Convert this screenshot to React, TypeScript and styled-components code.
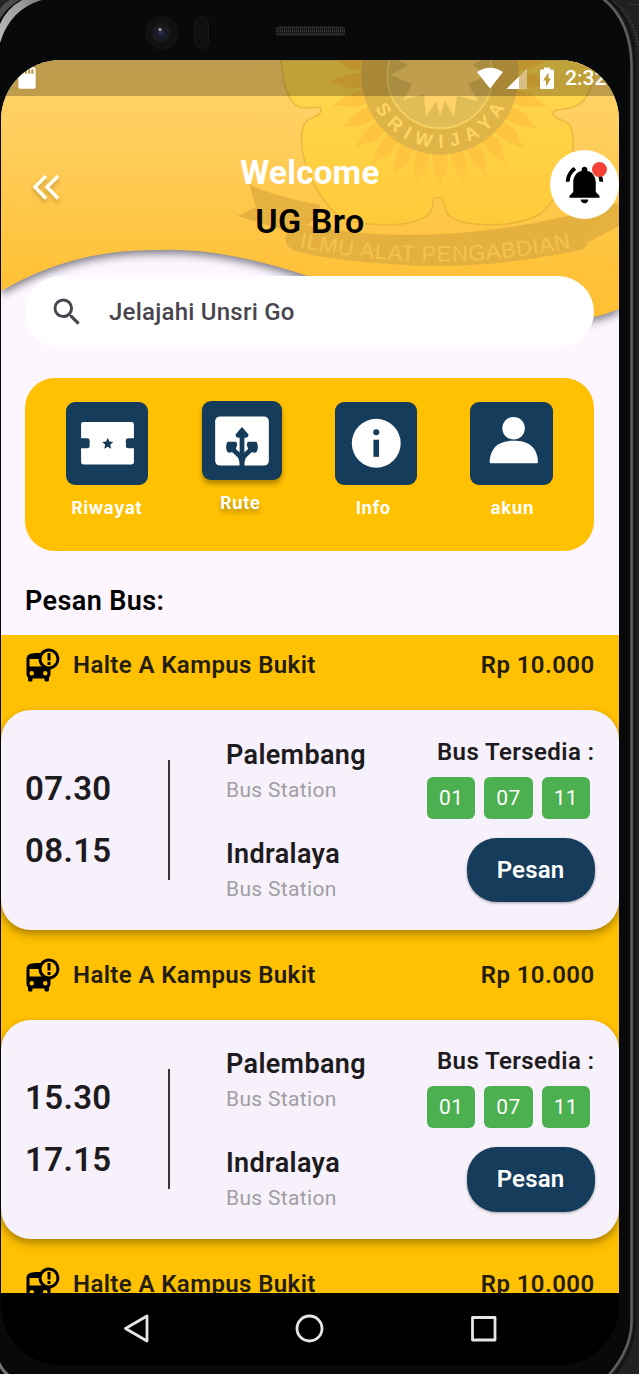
import React from 'react';
import styled, { createGlobalStyle } from 'styled-components';
import { MdBusAlert, MdNotificationsActive, MdSdCard, MdSearch } from 'react-icons/md';

const Global = createGlobalStyle`
  * { box-sizing: border-box; }
  html, body { margin: 0; background: #08090b; overflow: hidden; }
  body { font-family: Roboto, "Liberation Sans", sans-serif; }
`;

const Device = styled.div`
  position: relative;
  width: 639px;
  height: 1374px;
  padding: 60px 20px 9px 1px;
  background: #08090b;
  overflow: hidden;
`;

const Shell = styled.svg`
  position: absolute;
  inset: 0;
`;

const Screen = styled.main`
  position: relative;
  display: flex;
  flex-direction: column;
  width: 618px;
  height: 1305px;
  border-radius: 60px;
  background: linear-gradient(#fdf6ff 1200px, #000 1200px);
  overflow: hidden;
`;

const Art = styled.svg`
  position: absolute;
  left: 0;
  top: 0;
`;

const StatusBar = styled.div`
  position: relative;
  display: flex;
  align-items: center;
  height: 35.5px;
  flex: none;
  padding: 0 10px 0 13px;
  background: rgba(0, 0, 0, 0.25);
  color: #fff;
`;

const StatusIcons = styled.svg`
  margin-left: auto;
`;

const Clock = styled.span`
  width: 44px;
  margin-left: 11px;
  font-size: 21px;
  line-height: 36px;
  font-weight: 500;
  white-space: nowrap;
`;

const Header = styled.header`
  position: relative;
  display: grid;
  grid-template-columns: 69px 1fr 69px;
  align-items: start;
  height: 180.5px;
  flex: none;
`;

const BackButton = styled.button`
  display: flex;
  border: 0;
  padding: 0;
  margin: 74.5px 0 0 26px;
  background: none;
`;

const Greeting = styled.h1`
  margin: 53px 0 0;
  font-size: 33px;
  line-height: 48px;
  font-weight: 700;
  letter-spacing: 0.3px;
  text-align: center;
  color: #fff;
`;

const UserName = styled.div`
  font-size: 34px;
  font-weight: 600;
  color: #000;
  letter-spacing: 0.5px;
`;

const BellButton = styled.button`
  position: relative;
  display: flex;
  align-items: center;
  justify-content: center;
  width: 69px;
  height: 69px;
  margin: 54px 0 0 -0.5px;
  padding: 0;
  border: 0;
  border-radius: 50%;
  background: #fff;
  color: #000;
`;

const Dot = styled.span`
  position: absolute;
  right: 12px;
  top: 12px;
  width: 15px;
  height: 15px;
  border-radius: 50%;
  background: #f44336;
`;

const SearchBar = styled.div`
  position: relative;
  display: flex;
  align-items: center;
  gap: 24px;
  flex: none;
  height: 72px;
  margin: 0 25px 0 24px;
  padding-left: 24px;
  border-radius: 36px;
  background: #fff;
  color: #49454f;
  font-size: 24px;
  letter-spacing: 0.24px;
  font-weight: 500;
`;

const Menu = styled.nav`
  display: grid;
  grid-template-columns: 82px 80px 82px 82px;
  column-gap: 53.5px;
  flex: none;
  height: 172.5px;
  margin: 30px 25px 0 24px;
  padding: 24px 0 0 41px;
  border-radius: 30px;
  background: #ffc102;
`;

const MenuItem = styled.div<{ $raised?: boolean }>`
  display: flex;
  flex-direction: column;
  align-items: center;
  gap: ${p => (p.$raised ? 11 : 11.5)}px;
  margin-top: ${p => (p.$raised ? -1.5 : 0)}px;
  color: #fff;
  font-family: Inter, Roboto, sans-serif;
  font-size: 17px;
  line-height: 24px;
  font-weight: 700;
  text-shadow: ${p => (p.$raised ? '0 4px 4px rgba(0,0,0,.28)' : 'none')};
`;

const Tile = styled.div<{ $raised?: boolean }>`
  width: ${p => (p.$raised ? 80 : 82.5)}px;
  height: ${p => (p.$raised ? 79.5 : 82.5)}px;
  border-radius: 9px;
  background: #153c5b;
  box-shadow: ${p => (p.$raised ? '0 4px 5px rgba(0,0,0,.3)' : 'none')};
  svg { display: block; width: 100%; height: 100%; }
`;

const Caption = styled.span<{ $nudge?: number }>`
  letter-spacing: 0.7px;
  margin-right: ${p => p.$nudge ?? 0}px;
`;

const SectionTitle = styled.h2`
  flex: none;
  height: 84px;
  margin: 0;
  padding: 34px 24px 0;
  font-size: 27px;
  line-height: 33px;
  font-weight: 600;
  letter-spacing: 0.4px;
  color: #000;
`;

const Trips = styled.section`
  flex: 1;
  min-height: 0;
  overflow: hidden;
  background: #ffc102;
`;

const Trip = styled.article`
  height: 309.6px;
  padding-top: 12.5px;
`;

const TripHead = styled.div`
  display: flex;
  align-items: center;
  height: 36px;
  margin: 0 24.5px 27px 24px;
  gap: 12px;
  color: #241d10;
  font-size: 24px;
  font-weight: 600;
  letter-spacing: 0.4px;
  svg { color: #000; }
`;

const Price = styled.span`
  margin-left: auto;
`;

const TripCard = styled.div`
  display: flex;
  align-items: center;
  height: 219.5px;
  padding: 0 24.5px 0 24px;
  border-radius: 30px;
  background: #f6f1fa;
  box-shadow: 0 3px 6px rgba(0, 0, 0, 0.22), 0 6px 12px rgba(0, 0, 0, 0.15);
  color: #1d1b20;
`;

const Times = styled.div`
  display: flex;
  flex-direction: column;
  gap: 22px;
  width: 143px;
  font-size: 33px;
  line-height: 40px;
  font-weight: 600;
  letter-spacing: 0.35px;
`;

const Divider = styled.div`
  width: 1.5px;
  height: 120px;
  background: #37353a;
`;

const Stops = styled.div`
  display: flex;
  flex-direction: column;
  gap: 35px;
  margin-left: 56.5px;
  padding-top: 1px;
`;

const StopName = styled.div`
  font-size: 27px;
  line-height: 32px;
  font-weight: 600;
  letter-spacing: 0.35px;
`;

const StopKind = styled.div`
  margin-top: 7px;
  font-size: 21px;
  line-height: 25px;
  letter-spacing: 0.33px;
  color: #a09ea3;
`;

const Availability = styled.div`
  display: flex;
  flex-direction: column;
  align-items: flex-end;
  margin-left: auto;
  font-size: 24px;
  line-height: 28px;
  font-weight: 600;
  letter-spacing: 0.4px;
`;

const Chips = styled.div`
  display: flex;
  gap: 9px;
  margin: 11px 4.5px 19px 0;
`;

const Chip = styled.span`
  width: 48.3px;
  height: 42px;
  border-radius: 6px;
  background: #4caf50;
  color: #fff;
  font-size: 21px;
  line-height: 42px;
  font-weight: 400;
  text-align: center;
`;

const OrderButton = styled.button`
  width: 128px;
  height: 64.5px;
  padding: 0;
  border: 0;
  border-radius: 30px;
  background: #153c5b;
  box-shadow: 0 1px 3px rgba(0, 0, 0, 0.35);
  color: #fff;
  font: 600 24px Roboto, sans-serif;
  letter-spacing: 0.15px;
`;

const NavBar = styled.footer`
  flex: none;
  height: 72.5px;
  background: #000;
  svg { display: block; }
`;

const DeviceShell = () => (
  <Shell width="639" height="1374" viewBox="0 0 639 1374" fill="none">
    <defs>
      <radialGradient id="lens">
        <stop offset="0" stopColor="#30344e" />
        <stop offset=".45" stopColor="#141624" />
        <stop offset=".65" stopColor="#1d1d1f" />
        <stop offset="1" stopColor="#101012" />
      </radialGradient>
      <linearGradient id="silver" x1="0" y1="1" x2="1" y2="0">
        <stop offset="0" stopColor="#bdbdbd" />
        <stop offset=".7" stopColor="#9b9b9b" />
        <stop offset="1" stopColor="#777" />
      </linearGradient>
      <pattern id="mesh" width="2" height="3" patternUnits="userSpaceOnUse">
        <rect width="2" height="3" fill="#191919" />
        <rect width="1" height="2" fill="#383838" />
      </pattern>
    </defs>
    <path d="M0 0H20Q7 7 0 19Z" fill="#4b4c4e" />
    <path d="M0 0H10Q4 3 0 9Z" fill="#232426" />
    <path d="M22 0H42Q10 9 0 43V24Q7 8 22 0Z" fill="url(#silver)" />
    <path d="M604 0Q632 22 632 70V1322Q632 1352 610 1374H639V0Z" fill="#202123" />
    <path d="M602 -2Q631 20 631.500 66V1322Q631 1350 608 1376" stroke="#5f6161" strokeWidth="2.500" />
    <path d="M608 -1Q635 20 635 66V1322Q634 1352 614 1375" stroke="#111213" strokeWidth="2" />
    <path d="M613 1Q635 18 638 46" stroke="#777" strokeWidth="1" strokeDasharray="1 2" />
    <path d="M628 4.500H639" stroke="#333" />
    <path d="M-1 1363Q2 1370 8 1375" stroke="#777" strokeWidth="3" />
    <circle cx="162" cy="33" r="17" fill="#111113" />
    <circle cx="161" cy="33" r="11" fill="url(#lens)" />
    <circle cx="160" cy="29.500" r="1.600" fill="#aaa" />
    <rect x="194.500" y="16.500" width="14" height="32" rx="7" fill="#0d0e0f" stroke="#17181a" />
    <circle cx="201" cy="24" r="5" stroke="#151517" />
    <circle cx="201" cy="41" r="5" stroke="#151517" />
    <rect x="276" y="26" width="69" height="10" rx="4" fill="url(#mesh)" />
  </Shell>
);

const petals = Array.from({ length: 29 }, (_, i) => -14 + i);

const HeaderArt = () => (
  <Art width="618" height="290" viewBox="1 60 618 290">
    <defs>
      <linearGradient id="sun" x1="0" y1="60" x2="0" y2="320" gradientUnits="userSpaceOnUse">
        <stop offset="0" stopColor="#ffd268" />
        <stop offset=".25" stopColor="#ffcf60" />
        <stop offset=".8" stopColor="#ffc23a" />
        <stop offset="1" stopColor="#ffbf32" />
      </linearGradient>
      <linearGradient id="flower" x1="0" y1="60" x2="0" y2="225" gradientUnits="userSpaceOnUse">
        <stop offset="0" stopColor="#ffd84f" />
        <stop offset="1" stopColor="#ffca3a" />
      </linearGradient>
      <filter id="soft" x="-5%" y="-5%" width="110%" height="120%">
        <feGaussianBlur stdDeviation="4" />
      </filter>
      <path id="ringText" d="M375.300 107.300A72 72 0 0 0 506 104" />
      <path id="bannerText" d="M299 247Q435 276 575 247" />
      <clipPath id="sky">
        <path d="M1 60H619V309Q595 319 560 323Q440 330 330 284Q230 247 160 250Q75 248 1 291Z" />
      </clipPath>
    </defs>
    <path d="M1 60H619V309Q595 319 560 323Q440 330 330 284Q230 247 160 250Q75 248 1 291Z" fill="#55555f" opacity=".75" filter="url(#soft)" transform="translate(0 4)" />
    <g clipPath="url(#sky)">
      <rect x="1" y="60" width="618" height="290" fill="url(#sun)" />
      <path
        d="M281 60C283 88 290 108 305 108C316 108 322 105 321 111C319 119 307 115 303 127C296 155 315 195 338 216C360 226 398 228 418 220C434 216 432 206 434 198H442C446 206 444 216 456 220C478 228 520 226 540 214C562 196 578 160 572 130C569 118 555 122 553 114C553 107 565 112 578 105C590 98 594 80 598 60Z"
        fill="url(#flower)" stroke="#dfac35" strokeOpacity=".65" strokeWidth="1.500"
      />
      <g fill="#ffc440">
        {petals.map(i => (
          <path key={i} d="M-7 76Q-9 90 0 112Q1 102 6 96Q9 86 6 76Z" transform={`translate(440 76) rotate(${i * 12.4})`} />
        ))}
      </g>
      <circle cx="440" cy="75.700" r="78.700" fill="#e0b548" />
      <circle cx="440" cy="75.700" r="52.500" fill="#e1bd57" stroke="#f5cf60" strokeWidth="2" />
      <path
        d="M398 60L408 65L391 75L412 84L403 100L424 94L426 117L436 101L440 116L445 101L454 117L457 96L478 101L468 84L488 75L472 65L481 60Z"
        fill="#ffd368"
      />
      <text fill="#ffd666" fontFamily="Liberation Sans" fontWeight="700" fontSize="18.500">
        <textPath href="#ringText" textLength="160">SRIWIJAYA</textPath>
      </text>
      <path d="M249 184Q270 195 320 205Q322 222 290 232L237 216L256 207Z" fill="#e6b23f" />
      <path d="M619 204Q590 220 570 223L585 244L619 226Z" fill="#e6b23f" />
      <path d="M300 224Q440 254 619 203V212L586 234Q592 249 575 251Q500 267 425 266Q330 262 292 250Q280 240 290 229Z" fill="#e4b13e" />
      <text fill="#f4c34d" fontFamily="Liberation Sans" fontSize="22">
        <textPath href="#bannerText" textLength="274">ILMU ALAT PENGABDIAN</textPath>
      </text>
    </g>
  </Art>
);

const TicketIcon = () => (
  <svg viewBox="0 0 82 82">
    <path d="M17 20H65Q67.500 20 67.500 22V36H62Q59.500 36 59.500 38V44Q59.500 46 62 46H67.500V60Q67.500 62 65.500 62H17Q15 62 15 60V46H21Q23.500 46 23.500 44V38Q23.500 36 21 36H15V22Q15 20 17 20Z" fill="#fff" />
    <path d="M41.500 35.500L43.100 39.300L47 39.700L44 42.400L44.900 46.500L41.500 44.400L38 46.500L38.900 42.400L36 39.700L39.900 39.300Z" fill="#153c5b" />
  </svg>
);

const RouteIcon = () => (
  <svg viewBox="0 0 80 80">
    <rect x="13" y="15.500" width="54" height="49.500" rx="5" fill="#fff" />
    <g fill="#153c5b" stroke="#153c5b" strokeLinejoin="round" strokeWidth="2">
      <path d="M40 27.500L45.500 34Q45.500 36 43 36H37Q34.500 36 34.500 34Z" />
      <path d="M26 42H33Q35 43 33.500 46L32.500 49Q28 52 26 50.500Q24 46 26 42Z" />
      <path d="M54 42H47Q45 43 46.500 46L47.500 49Q52 52 54 50.500Q56 46 54 42Z" />
    </g>
    <path d="M40 35V66M29 47L37.500 55Q40 58 40 66M51 47L42.500 55Q40 58 40 66" fill="none" stroke="#153c5b" strokeWidth="4.800" />
  </svg>
);

const InfoIcon = () => (
  <svg viewBox="0 0 82 82">
    <circle cx="41" cy="41" r="24.300" fill="#fff" />
    <circle cx="41" cy="30" r="3" fill="#153c5b" />
    <rect x="38.200" y="37.500" width="5.600" height="17" fill="#153c5b" />
  </svg>
);

const PersonIcon = () => (
  <svg viewBox="0 0 82 82">
    <circle cx="43.300" cy="26" r="11.200" fill="#fff" />
    <path d="M20.500 61Q19.500 61 19.500 59.500C20 44 30 38.500 43.500 38.500S67 44 67.500 59.500Q67.500 61 66.500 61Z" fill="#fff" />
  </svg>
);

const trips = [
  { from: '07.30', to: '08.15' },
  { from: '15.30', to: '17.15' },
  { from: '17.30', to: '18.15' },
];

const TripItem = ({ from, to }: { from: string; to: string }) => (
  <Trip>
    <TripHead>
      <MdBusAlert size={36} />
      <span>Halte A Kampus Bukit</span>
      <Price>Rp 10.000</Price>
    </TripHead>
    <TripCard>
      <Times><span>{from}</span><span>{to}</span></Times>
      <Divider />
      <Stops>
        {['Palembang', 'Indralaya'].map(name => (
          <div key={name}>
            <StopName>{name}</StopName>
            <StopKind>Bus Station</StopKind>
          </div>
        ))}
      </Stops>
      <Availability>
        <span>Bus Tersedia :</span>
        <Chips>{['01', '07', '11'].map(n => <Chip key={n}>{n}</Chip>)}</Chips>
        <OrderButton>Pesan</OrderButton>
      </Availability>
    </TripCard>
  </Trip>
);

const BackIcon = styled.svg`
  filter: drop-shadow(0 3px 2px rgba(0, 0, 0, 0.22));
`;

export default function App() {
  return (
    <>
      <Global />
      <Device>
        <DeviceShell />
        <Screen>
          <HeaderArt />
          <StatusBar>
            <MdSdCard size={26} />
            <StatusIcons width="78" height="24" viewBox="476 65 78 24" fill="#fff">
              <path d="M477 71Q490 62.500 503 71L490 87.500Z" />
              <path d="M527 67.500V88H506.500Z" opacity=".4" />
              <path d="M519 75.500V88H506.500Z" />
              <path fillRule="evenodd" d="M544 66.500H550V68.500H552.500Q554 68.500 554 70V86.500Q554 88 552.500 88H541.500Q540 88 540 86.500V70Q540 68.500 541.500 68.500H544ZM548.500 71.500L543 79.500H546V86L551 77.500H548.500Z" />
            </StatusIcons>
            <Clock>2:32</Clock>
          </StatusBar>
          <Header>
            <BackButton aria-label="Back">
              <BackIcon width="40" height="36" viewBox="28 170 40 36" fill="none" stroke="#fffdf0" strokeWidth="3.600">
                <path d="M47 176L36 187L47 198.500M59 176L48 187L59 198.500" />
              </BackIcon>
            </BackButton>
            <Greeting>
              Welcome
              <UserName>UG Bro</UserName>
            </Greeting>
            <BellButton aria-label="Notifications">
              <MdNotificationsActive size={45} />
              <Dot />
            </BellButton>
          </Header>
          <SearchBar>
            <MdSearch size={36} />
            <span>Jelajahi Unsri Go</span>
          </SearchBar>
          <Menu>
            <MenuItem><Tile><TicketIcon /></Tile><Caption>Riwayat</Caption></MenuItem>
            <MenuItem $raised><Tile $raised><RouteIcon /></Tile><Caption $nudge={2}>Rute</Caption></MenuItem>
            <MenuItem><Tile><InfoIcon /></Tile><Caption $nudge={5}>Info</Caption></MenuItem>
            <MenuItem><Tile><PersonIcon /></Tile><Caption $nudge={-2}>akun</Caption></MenuItem>
          </Menu>
          <SectionTitle>Pesan Bus:</SectionTitle>
          <Trips>{trips.map(t => <TripItem key={t.from} {...t} />)}</Trips>
          <NavBar>
            <svg width="618" height="72" viewBox="1 1293 618 72" fill="none" stroke="#e6e6e6" strokeWidth="2.800" strokeLinejoin="round">
              <path d="M147 1316V1341L125.500 1328.500Z" />
              <circle cx="309.500" cy="1328.500" r="12.500" />
              <rect x="472.500" y="1317.500" width="22.500" height="22.500" />
            </svg>
          </NavBar>
        </Screen>
      </Device>
    </>
  );
}
